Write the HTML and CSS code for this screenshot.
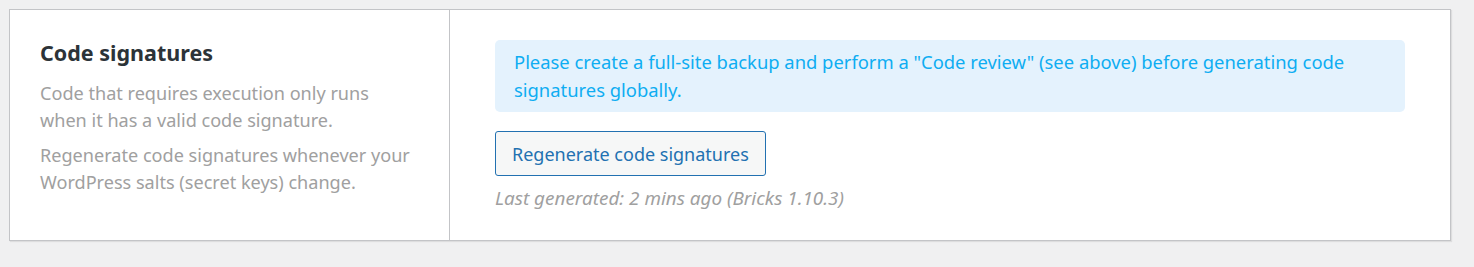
FILE: index.html
```html
<!DOCTYPE html>
<html lang="en">
<head>
    <meta charset="UTF-8">
    <meta name="viewport" content="width=device-width, initial-scale=1.0">
    <title>Code signatures</title>
    <link rel="stylesheet" href="styles.css">
</head>
<body>
    <div class="setting">
        <div class="setting-info">
            <h2>Code signatures</h2>
            <p>Code that requires execution only runs when it has a valid code signature.</p>
            <p>Regenerate code signatures whenever your WordPress salts (secret keys) change.</p>
        </div>
        <div class="setting-body">
            <div class="notice">Please create a full-site backup and perform a "Code review" (see above) before generating code signatures globally.</div>
            <button type="button" class="button">Regenerate code signatures</button>
            <p class="meta">Last generated: 2 mins ago (Bricks 1.10.3)</p>
        </div>
    </div>
</body>
</html>
```

FILE: styles.css
```css
body {
    font-family: "Noto Sans", "Open Sans", sans-serif;
    background-color: #f0f0f1;
    color: #3c434a;
    margin: 0;
    padding: 9px 23px 9px 9px;
}
.setting {
    display: flex;
    background-color: white;
    border: 1px solid #c3c4c7;
    box-shadow: 1px 1px 1px rgba(0, 0, 0, 0.08);
    min-height: 230px;
}
.setting-info {
    width: 440px;
    box-sizing: border-box;
    padding: 30px 36px 30px 30px;
    border-right: 1px solid #c3c4c7;
}
.setting-info h2 {
    margin: 0 0 14px;
    font-size: 21.5px;
    font-weight: 700;
    color: #2c3338;
    line-height: 26px;
}
.setting-info p {
    margin: 0 0 8px;
    font-size: 18.1px;
    line-height: 27px;
    color: #a0a0a0;
}
.setting-body {
    flex: 1;
    padding: 30px 45px;
}
.notice {
    background-color: #e4f2fd;
    color: #0eadf2;
    border-radius: 5px;
    padding: 8px 19px;
    font-size: 18.4px;
    line-height: 28px;
}
.button {
    margin-top: 19px;
    background-color: #f6f7f7;
    color: #2271b1;
    border: 1px solid #2271b1;
    border-radius: 3px;
    padding: 0 16px;
    height: 45px;
    font-family: inherit;
    font-size: 18px;
    cursor: pointer;
}
.meta {
    margin: 10px 0 0;
    font-size: 18.9px;
    font-style: italic;
    color: #a0a0a0;
    line-height: 24px;
}
```
